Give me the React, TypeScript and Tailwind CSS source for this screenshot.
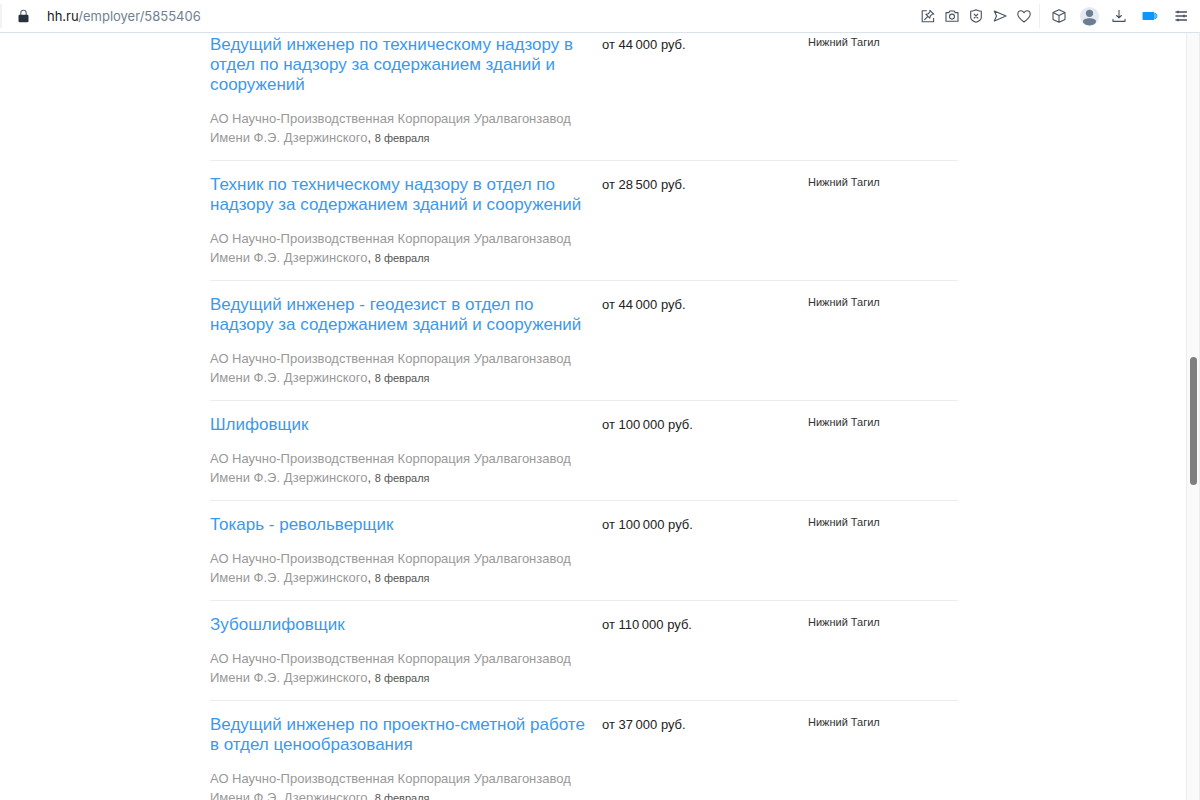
import type { ReactNode } from "react";

type Vacancy = { title: string; salary: string; city: string; date: string };

const vacancies: Vacancy[] = [
  { title: "Ведущий инженер по техническому надзору в отдел по надзору за содержанием зданий и сооружений", salary: "44\u2009000", city: "Нижний Тагил", date: "8 февраля" },
  { title: "Техник по техническому надзору в отдел по надзору за содержанием зданий и сооружений", salary: "28\u2009500", city: "Нижний Тагил", date: "8 февраля" },
  { title: "Ведущий инженер - геодезист в отдел по надзору за содержанием зданий и сооружений", salary: "44\u2009000", city: "Нижний Тагил", date: "8 февраля" },
  { title: "Шлифовщик", salary: "100\u2009000", city: "Нижний Тагил", date: "8 февраля" },
  { title: "Токарь - револьверщик", salary: "100\u2009000", city: "Нижний Тагил", date: "8 февраля" },
  { title: "Зубошлифовщик", salary: "110\u2009000", city: "Нижний Тагил", date: "8 февраля" },
  { title: "Ведущий инженер по проектно-сметной работе в отдел ценообразования", salary: "37\u2009000", city: "Нижний Тагил", date: "8 февраля" },
];

function ToolButton({ label, children }: { label: string; children: ReactNode }) {
  return (
    <button type="button" aria-label={label} className="flex w-6 items-center justify-center text-[#48525e]">
      <svg width="14" height="14" viewBox="0 0 14 14" fill="none" stroke="currentColor" strokeWidth="1.1" strokeLinecap="round" strokeLinejoin="round" aria-hidden="true">
        {children}
      </svg>
    </button>
  );
}

function Toolbar() {
  return (
    <header className="flex h-[33px] shrink-0 items-center justify-between border-b border-[#dbe3ea] bg-white pr-[7px]">
      <div className="flex items-center">
        <span className="h-6 w-0.5 bg-[#f2f3f4]" />
        <svg className="ml-4 mr-[18px]" width="11" height="14" viewBox="0 0 11 14" aria-hidden="true">
          <path d="M2.8 6V3.9a2.7 2.7 0 0 1 5.4 0V6" fill="none" stroke="#5a646c" strokeWidth="1.1" />
          <rect x="0.5" y="5.8" width="10" height="7.4" rx="1.2" fill="#26323c" />
        </svg>
        <a href="#address" className="font-['Inter',sans-serif] text-[13px] leading-5 text-[#718091]">
          <span className="text-[#14191e]">hh.ru</span>/employer/5855406
        </a>
      </div>
      <div className="flex h-full items-center">
        <ToolButton label="Закрепить">
          <path d="M5.4 1.8H1.2v11h11.400V9.400M3.600 10.600l3-3M5 5.400l3.800 3.800.5-2.300 2.700-2.300M5 5.400l2.300-.6L9.400 2" />
          <path d="M8.800 1.400l4 3.800" />
        </ToolButton>
        <ToolButton label="Снимок">
          <path d="M1 3.6h2.8l1-1.6h4.4l1 1.6H13v8.600H1z" />
          <circle cx="7" cy="7.6" r="2.5" />
        </ToolButton>
        <ToolButton label="Блокировка рекламы">
          <path d="M7 .8c1.600 1 3.400 1.300 5.300 1.500v6.200c0 2.300-2.300 3.700-5.300 4.800-3-1.100-5.300-2.500-5.300-4.800V2.300C3.600 2.100 5.400 1.800 7 .8z" />
          <path d="M5.200 5.200l3.600 3.800M8.800 5.200L5.200 9" />
        </ToolButton>
        <ToolButton label="Отправить">
          <path d="M1.300 2l11.700 5-11.700 5 2.200-5z" />
        </ToolButton>
        <ToolButton label="Избранное">
          <path d="M7 13C3.400 10.200.8 8.100.8 5.200.8 3.200 2.200 1.800 4 1.800c1.300 0 2.300.7 3 1.900.7-1.200 1.700-1.900 3-1.900 1.800 0 3.200 1.400 3.200 3.400 0 2.900-2.600 5-6.200 7.800z" />
        </ToolButton>
        <span className="ml-[3px] mr-[7px] h-6 w-px bg-[#eceef0]" />
        <ToolButton label="Расширения">
          <path d="M7 .8l6 2.800v6.800l-6 2.800-6-2.800V3.600zM1 3.600l6 2.900 6-2.900M7 6.500v6.700" />
        </ToolButton>
        <button type="button" aria-label="Профиль" className="ml-[9px] mr-2">
          <svg width="19" height="19" viewBox="0 0 19 19" aria-hidden="true">
            <circle cx="9.500" cy="9.500" r="9.500" fill="#e3eaf1" />
            <circle cx="9.500" cy="6.300" r="3.600" fill="#6b7d8f" />
            <path d="M3 14.600c0-2.400 3-3.300 6.500-3.300s6.500.9 6.500 3.300c0 2-3 3.900-6.500 3.900S3 16.600 3 14.600z" fill="#6b7d8f" />
          </svg>
        </button>
        <ToolButton label="Загрузки">
          <path d="M7 1.300v7.500M4.600 6.500L7 8.900l2.400-2.400M1 10.200v2.200h12v-2.200" />
        </ToolButton>
        <button type="button" aria-label="Батарея" className="mx-[11px]">
          <svg width="16" height="10" viewBox="0 0 16 10" aria-hidden="true">
            <rect x="0.500" y="1" width="12" height="8" rx="1" fill="#0c97ff" />
            <path d="M13.200 2.300l1.600 1.200v3l-1.600 1.200z" fill="none" stroke="#0c97ff" strokeWidth="1" />
          </svg>
        </button>
        <ToolButton label="Настройки">
          <path d="M1.500 3h11.500M1.500 7h11.500M1.500 11h11.500" strokeWidth="1.300" strokeLinecap="butt" />
          <path d="M4 1.800v2.400M10 5.800v2.400M4 9.800v2.400" strokeWidth="1.600" strokeLinecap="butt" />
        </ToolButton>
      </div>
    </header>
  );
}

function VacancyRow({ vacancy }: { vacancy: Vacancy }) {
  return (
    <li className="grid grid-cols-[376px_190px_1fr] gap-x-4 border-t border-[#ebebeb] pt-3.5 pb-[13px] first:border-t-0 first:pt-0.5">
      <div>
        <h2 className="text-[17px] leading-5">
          <a href="#vacancy" className="text-[#3b98ef]">{vacancy.title}</a>
        </h2>
        <p className="mt-3.5 text-[13px] leading-[19px] text-[#555]">
          <a href="#employer" className="text-[#999]">
            АО Научно-Производственная Корпорация Уралвагонзавод Имени Ф.Э. Дзержинского
          </a>
          , <span className="text-[11px] leading-none">{vacancy.date}</span>
        </p>
      </div>
      <div className="text-[13px] leading-5 text-[#222]">от {vacancy.salary} руб.</div>
      <div className="text-[11px] leading-[14px] text-[#333]">{vacancy.city}</div>
    </li>
  );
}

export default function App() {
  return (
    <div className="flex h-screen flex-col overflow-hidden bg-white font-['Liberation_Sans',Arial,sans-serif]">
      <Toolbar />
      <div className="flex min-h-0 flex-1">
        <main className="min-w-0 flex-1 overflow-hidden">
          <ul className="mx-auto max-w-[766px] pr-[18px]">
            {vacancies.map((vacancy) => (
              <VacancyRow key={vacancy.title} vacancy={vacancy} />
            ))}
          </ul>
        </main>
        <div className="flex w-3.5 shrink-0 flex-col items-center border-x border-[#ececec] bg-[#fafafa]" aria-hidden="true">
          <div className="grow-[324] basis-0" />
          <div className="w-[7px] grow-[128] basis-0 rounded-full bg-[#7f7f7f]" />
          <div className="grow-[315] basis-0" />
        </div>
      </div>
    </div>
  );
}
